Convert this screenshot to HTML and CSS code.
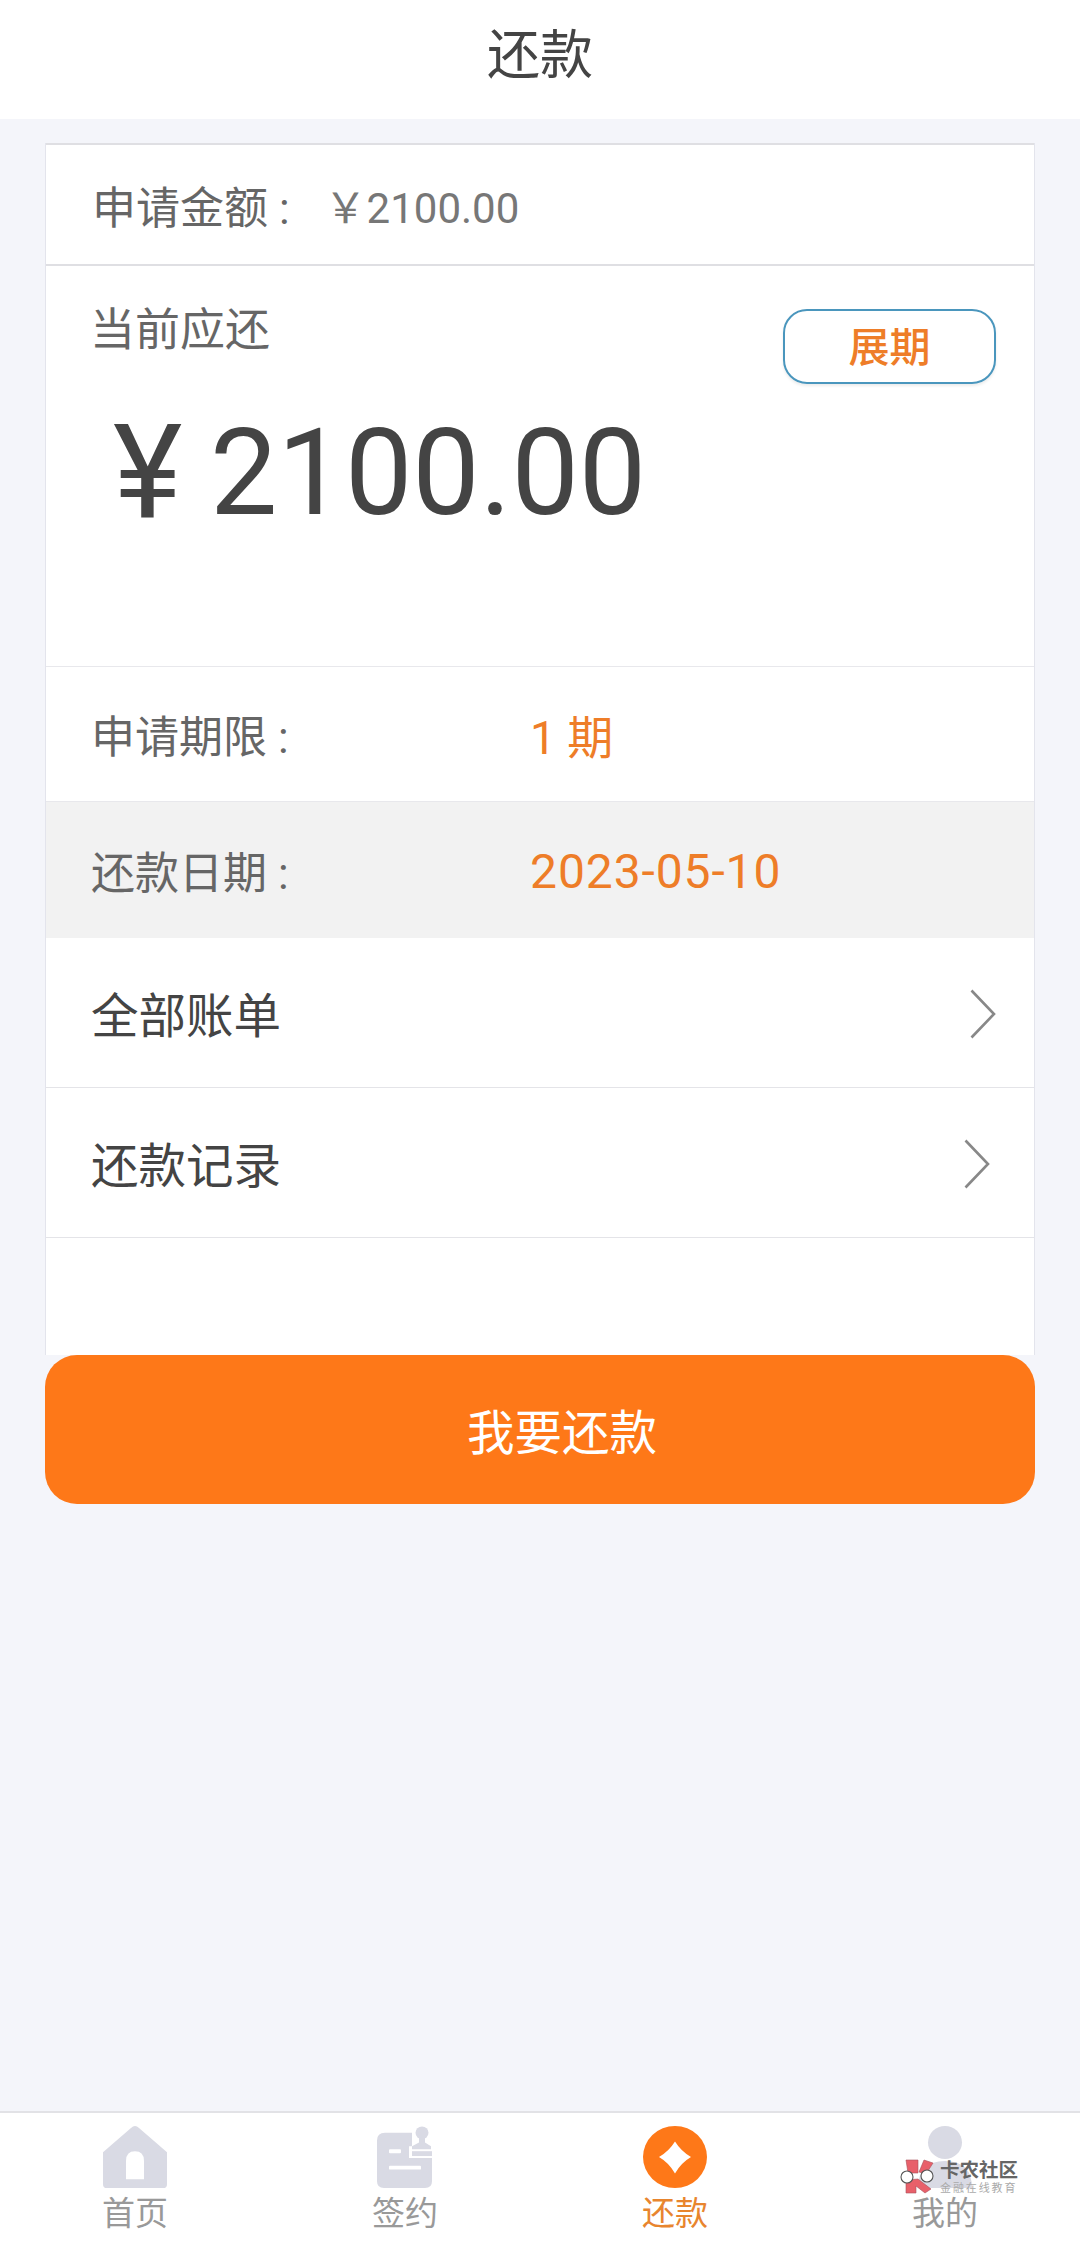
FILE: index.html
```html
<!DOCTYPE html>
<html lang="zh-CN">
<head>
  <meta charset="UTF-8" />
  <title>还款</title>
  <link rel="stylesheet" href="styles.css">
</head>
<body>
  <header class="top-bar">还款</header>
  <main class="content">
    <div class="card">
      <div class="apply-row">
        <span class="apply-label">申请金额 :</span>
        <span class="apply-value">￥2100.00</span>
      </div>
      <section class="due">
        <div class="due-head">
          <div class="due-label">当前应还</div>
          <a class="extend-btn">展期</a>
        </div>
        <div class="due-amount"><span class="yen">¥</span><span>2100.00</span></div>
      </section>
      <div class="info-row">
        <span class="info-label">申请期限 :</span>
        <span class="info-value">1 期</span>
      </div>
      <div class="info-row shaded">
        <span class="info-label">还款日期 :</span>
        <span class="info-value date">2023-05-10</span>
      </div>
      <a class="link-row">
        <span>全部账单</span>
        <svg class="arrow" width="26" height="50" viewBox="0 0 26 50"><path d="M1.5 1.5 L24 25 L1.5 48.5" fill="none" stroke="#888" stroke-width="2.6"/></svg>
      </a>
      <a class="link-row second">
        <span>还款记录</span>
        <svg class="arrow" width="26" height="50" viewBox="0 0 26 50"><path d="M1.5 1.5 L24 25 L1.5 48.5" fill="none" stroke="#888" stroke-width="2.6"/></svg>
      </a>
      <div class="card-gap"></div>
    </div>
    <button class="pay-btn">我要还款</button>
  </main>
  <footer class="tab-bar">
    <div class="tab">
      <svg width="64" height="62" viewBox="0 0 64 64" preserveAspectRatio="none"><path fill-rule="evenodd" fill="#d9dae4" d="M32 0 Q34 0 36 2 L64 27 V60 Q64 64 60 64 H4 Q0 64 0 60 V27 L28 2 Q30 0 32 0 Z M23 55 H41 V36 Q41 26 32 26 Q23 26 23 36 Z"/></svg>
      <span>首页</span>
    </div>
    <div class="tab">
      <svg width="64" height="62" viewBox="0 0 64 64" preserveAspectRatio="none"><g transform="translate(3 0)"><path fill="#d9dae4" d="M9 7 H36 V20 L34 27 V32 H56 V57 Q56 64 49 64 H8 Q1 64 1 57 V15 Q1 7 9 7 Z"/><g fill="#fff"><rect x="13" y="24" width="12" height="4" rx="1"/><rect x="13" y="41" width="32" height="4" rx="1"/></g><path fill="#fff" d="M33 21 H38 V13 H54 V21 H60 V33 H33 Z"/><circle cx="46" cy="7" r="6.5" fill="#d9dae4"/><path fill="#d9dae4" d="M43 12 H49 V17 L55 21 V24 H36 V21 L43 17 Z"/><rect x="36" y="26" width="20" height="5" fill="#d9dae4"/></g></svg>
      <span>签约</span>
    </div>
    <div class="tab active">
      <svg width="64" height="62" viewBox="0 0 64 64" preserveAspectRatio="none"><circle cx="32" cy="32" r="32" fill="#fe7818"/><path fill="#fff" d="M32 16 Q38 26 48 32 Q38 38 32 49 Q26 38 16 32 Q26 26 32 16 Z"/></svg>
      <span>还款</span>
    </div>
    <div class="tab">
      <svg width="64" height="62" viewBox="0 0 64 64" preserveAspectRatio="none"><circle cx="32" cy="17" r="17" fill="#d9dae4"/><path fill="#d9dae4" d="M5 64 Q5 36 32 36 Q59 36 59 64 Z"/></svg>
      <span>我的</span>
    </div>
    <div class="watermark">
      <svg class="wm-logo" width="36" height="36" viewBox="0 0 36 36"><g fill="#e8606a" stroke="#a8505a" stroke-width="0.6"><path d="M6 1 H18 V14 H8 Z"/><path d="M24 1 L33 4 L26 15 L19 13 Z"/><path d="M6 21 L18 20 L31 30 L25 34 L16 27 V34 H6 Z"/></g><circle cx="7" cy="18" r="6" fill="#fff" stroke="#555" stroke-width="1.1"/><circle cx="27" cy="17" r="6" fill="#fff" stroke="#555" stroke-width="1.1"/></svg>
      <div class="wm-text">
        <div class="wm-name">卡农社区</div>
        <div class="wm-sub">金融在线教育</div>
      </div>
    </div>
  </footer>
</body>
</html>
```
FILE: styles.css
```css
* { margin: 0; padding: 0; box-sizing: border-box; }
html, body { height: 100%; }
body { width: 1080px; height: 2249px; display: flex; flex-direction: column; background-color: #f4f5fa; font-family: Roboto, "Noto Sans CJK SC", sans-serif; color: #444; overflow: hidden; }

.top-bar { height: 119px; background-color: #fff; text-align: center; font-size: 53px; line-height: 112px; color: #444; }

.content { flex: 1; padding-top: 24px; }
.card { margin: 0 45px; background-color: #fff; border-left: 1px solid #e3e4ec; border-right: 1px solid #e3e4ec; }

.apply-row { height: 123px; display: flex; align-items: center; padding-left: 46px; border-top: 2px solid #dfdfe3; border-bottom: 2px solid #dfdfe3; }
.apply-label { font-size: 44px; color: #666; white-space: pre; }
.apply-value { font-size: 42px; color: #777; margin-left: 35px; }

.due { height: 401px; padding: 37px 38px 0 44px; border-bottom: 1px solid #e8e8ec; }
.due-head { display: flex; justify-content: space-between; align-items: flex-start; }
.due-label { font-size: 45px; line-height: 56px; color: #666; }
.extend-btn { width: 213px; height: 75px; margin-top: 6px; border: 2px solid #4a96bd; border-radius: 24px; text-align: center; font-size: 41px; line-height: 74px; font-weight: 500; color: #ee7d28; box-shadow: 0 2px 3px rgba(0,0,0,0.08); }
.due-amount { display: flex; align-items: center; margin-top: 19px; margin-left: 23px; font-size: 120px; line-height: 140px; color: #444; }
.yen { width: 97px; font-size: 132px; }

.info-row { height: 135px; display: flex; align-items: center; padding-left: 45px; border-bottom: 1px solid #e8e8ec; }
.info-row.shaded { height: 136px; background-color: #f2f2f2; border-bottom: none; }
.info-label { width: 439px; font-size: 44px; color: #666; }
.info-value { font-size: 46px; color: #ee7d28; }
.info-value.date { font-size: 48px; letter-spacing: 0.9px; padding-top: 3px; }

.link-row { height: 150px; display: flex; align-items: center; justify-content: space-between; padding: 0 38px 0 45px; border-bottom: 1px solid #e4e4e8; font-size: 47.5px; color: #444; }
.link-row.second { padding-right: 44px; }
.arrow { margin-top: 2px; }
.card-gap { height: 117px; }

.pay-btn { display: block; width: 990px; height: 149px; margin-left: 45px; border: none; border-radius: 32px; background-color: #fe7818; color: #fff; font-family: inherit; font-size: 47.5px; padding-left: 44px; }

.tab-bar { position: relative; height: 138px; display: flex; background-color: #fff; border-top: 2px solid #e2e2e6; }
.tab { width: 270px; display: flex; flex-direction: column; align-items: center; padding-top: 13px; font-size: 33px; line-height: 40px; color: #999; }
.tab svg { display: block; margin-bottom: 6px; }
.tab.active { color: #e8852e; }

.watermark { position: absolute; left: 900px; top: 46px; display: flex; align-items: flex-start; gap: 4px; }
.wm-text { margin-top: 1px; }
.wm-name { font-size: 19.5px; line-height: 22px; font-weight: 700; color: #666; }
.wm-sub { font-size: 11px; line-height: 13px; letter-spacing: 1.9px; color: #aaa; white-space: nowrap; }
```
